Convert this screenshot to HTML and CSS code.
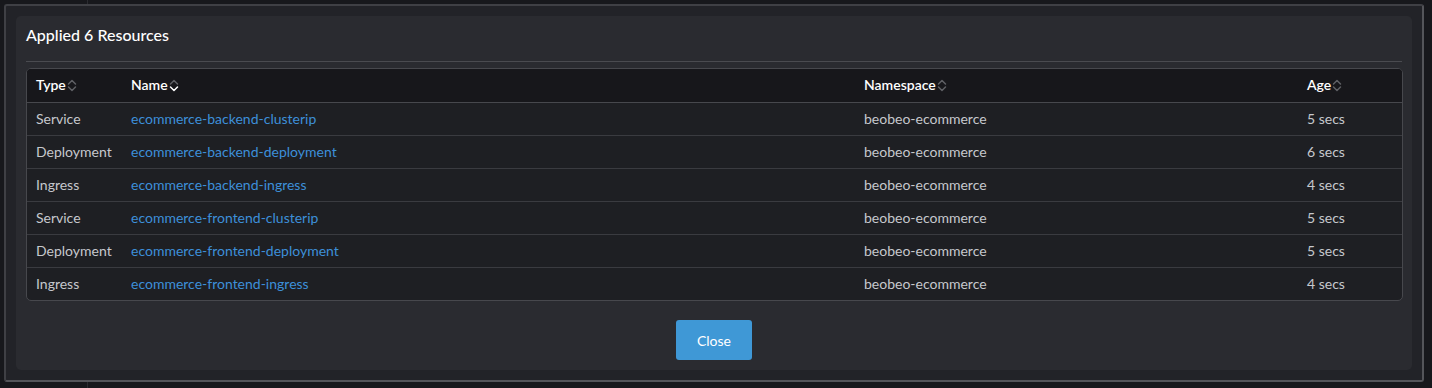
FILE: index.html
```html
<!DOCTYPE html>
<html>
<head>
<title>Applied 6 Resources</title>
<link rel="stylesheet" href="styles.css">
</head>
<body>
  <div class="frame">
    <div class="dialog">
      <div class="dialog-title">Applied 6 Resources</div>

      <div class="table-box">
        <table class="resources">
          <colgroup>
            <col class="c-type">
            <col class="c-name">
            <col class="c-ns">
            <col class="c-age">
          </colgroup>
          <thead>
            <tr>
              <th>Type<svg class="sort" viewBox="0 0 10 15"><path class="up" d="M1.5 6 L5 2.5 L8.5 6"/><path class="down" d="M1.5 9 L5 12.5 L8.5 9"/></svg></th>
              <th>Name<svg class="sort" viewBox="0 0 10 15"><path class="up" d="M1.5 6 L5 2.5 L8.5 6"/><path class="down on" d="M1.5 9 L5 12.5 L8.5 9"/></svg></th>
              <th>Namespace<svg class="sort" viewBox="0 0 10 15"><path class="up" d="M1.5 6 L5 2.5 L8.5 6"/><path class="down" d="M1.5 9 L5 12.5 L8.5 9"/></svg></th>
              <th>Age<svg class="sort" viewBox="0 0 10 15"><path class="up" d="M1.5 6 L5 2.5 L8.5 6"/><path class="down" d="M1.5 9 L5 12.5 L8.5 9"/></svg></th>
            </tr>
          </thead>
          <tbody>
            <tr><td>Service</td><td><a href="#">ecommerce-backend-clusterip</a></td><td>beobeo-ecommerce</td><td>5 secs</td></tr>
            <tr><td>Deployment</td><td><a href="#">ecommerce-backend-deployment</a></td><td>beobeo-ecommerce</td><td>6 secs</td></tr>
            <tr><td>Ingress</td><td><a href="#">ecommerce-backend-ingress</a></td><td>beobeo-ecommerce</td><td>4 secs</td></tr>
            <tr><td>Service</td><td><a href="#">ecommerce-frontend-clusterip</a></td><td>beobeo-ecommerce</td><td>5 secs</td></tr>
            <tr><td>Deployment</td><td><a href="#">ecommerce-frontend-deployment</a></td><td>beobeo-ecommerce</td><td>5 secs</td></tr>
            <tr><td>Ingress</td><td><a href="#">ecommerce-frontend-ingress</a></td><td>beobeo-ecommerce</td><td>4 secs</td></tr>
          </tbody>
        </table>
      </div>

      <div class="dialog-actions">
        <button class="button" type="button">Close</button>
      </div>
    </div>
  </div>
</body>
</html>
```

FILE: styles.css
```css
html, body {
    margin: 0;
    height: 100%;
}

body {
    background-color: #17181c;
    background-image:
        linear-gradient(to right, transparent 87px, #2a2b30 87px, #2a2b30 88px, transparent 88px);
    padding: 4px 8px 6px 4px;
    box-sizing: border-box;
    font-family: Lato, "Open Sans", sans-serif;
    font-size: 14px;
    color: #c6c8cd;
}

.frame {
    height: 378px;
    box-sizing: border-box;
    border: 2px solid #54555a;
    border-top-color: #3f4045;
    border-left-color: #3f4045;
    border-radius: 3px;
    background-color: #222328;
    padding: 10px;
}

.dialog {
    height: 354px;
    box-sizing: border-box;
    background-color: #2a2b30;
    border-radius: 5px;
    padding: 9px 9px 10px 10px;
    display: flex;
    flex-direction: column;
}

.dialog-title {
    color: #ffffff;
    font-size: 16px;
    font-weight: 500;
    line-height: 20px;
    padding-bottom: 16px;
    border-bottom: 1px solid #4a4b50;
    margin-right: 1px;
}

.table-box {
    margin-top: 6px;
    border: 1px solid #47484d;
    border-radius: 5px;
    overflow: hidden;
    background-color: #1e1f23;
}

.resources {
    width: 100%;
    border-collapse: collapse;
    table-layout: fixed;
}

.c-type { width: 95px; }
.c-name { width: 733px; }
.c-ns { width: 443px; }

.resources th,
.resources td {
    text-align: left;
    padding: 0 0 2px 9px;
    height: 30px;
    white-space: nowrap;
}

.resources th {
    height: 31px;
    background-color: #17171b;
    color: #ffffff;
    font-weight: 600;
    border-bottom: 1px solid #47484d;
}

.resources td {
    border-top: 1px solid #3a3b40;
}

.resources tbody tr:first-child td {
    border-top: none;
}

.resources a {
    color: #3d8fd9;
    text-decoration: none;
}

.sort {
    width: 10px;
    height: 15px;
    vertical-align: -3px;
    margin-left: 1px;
}

.sort path {
    fill: none;
    stroke: #5f6065;
    stroke-width: 1.5;
    stroke-linecap: round;
    stroke-linejoin: round;
}

.sort path.on {
    stroke: #ffffff;
}

.dialog-actions {
    margin-top: 19px;
    display: flex;
    justify-content: center;
    padding-right: 1px;
}

.button {
    width: 76px;
    height: 40px;
    border: none;
    border-radius: 3px;
    background-color: #3f98d6;
    color: #ffffff;
    font-family: Lato, "Open Sans", sans-serif;
    font-size: 14px;
    cursor: pointer;
}
```
